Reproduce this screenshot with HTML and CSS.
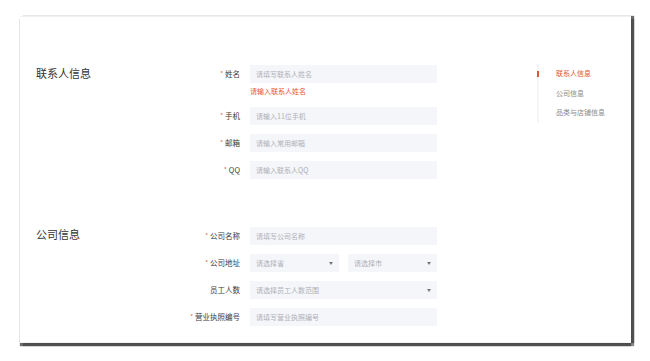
FILE: index.html
```html
<!DOCTYPE html>
<html lang="zh-CN">
<head>
<meta charset="utf-8">
<title>信息填写</title>
<link rel="stylesheet" href="styles.css">
</head>
<body>
<div class="card">
  <div class="main">
    <section class="section">
      <h2 class="section-title">联系人信息</h2>
      <div class="form">
        <div class="label"><span class="req">*</span>姓名</div>
        <div class="control">
          <div class="input">请填写联系人姓名</div>
          <div class="error">请输入联系人姓名</div>
        </div>
        <div class="label"><span class="req">*</span>手机</div>
        <div class="control"><div class="input">请输入11位手机</div></div>
        <div class="label"><span class="req">*</span>邮箱</div>
        <div class="control"><div class="input">请输入常用邮箱</div></div>
        <div class="label"><span class="req">*</span>QQ</div>
        <div class="control"><div class="input">请输入联系人QQ</div></div>
      </div>
    </section>
    <section class="section company">
      <h2 class="section-title">公司信息</h2>
      <div class="form">
        <div class="label"><span class="req">*</span>公司名称</div>
        <div class="control"><div class="input">请填写公司名称</div></div>
        <div class="label"><span class="req">*</span>公司地址</div>
        <div class="control split">
          <div class="input select"><span>请选择省</span><svg class="caret" width="4" height="3" viewBox="0 0 4 3"><path d="M0 0H4L2 3Z" fill="#777"/></svg></div>
          <div class="input select"><span>请选择市</span><svg class="caret" width="4" height="3" viewBox="0 0 4 3"><path d="M0 0H4L2 3Z" fill="#777"/></svg></div>
        </div>
        <div class="label">员工人数</div>
        <div class="control"><div class="input select"><span>请选择员工人数范围</span><svg class="caret" width="4" height="3" viewBox="0 0 4 3"><path d="M0 0H4L2 3Z" fill="#777"/></svg></div></div>
        <div class="label"><span class="req">*</span>营业执照编号</div>
        <div class="control"><div class="input">请填写营业执照编号</div></div>
      </div>
    </section>
  </div>
  <nav class="side-nav">
    <a class="nav-item active">联系人信息</a>
    <a class="nav-item">公司信息</a>
    <a class="nav-item">品类与店铺信息</a>
  </nav>
</div>
</body>
</html>
```

FILE: styles.css
```css
html, body {
  margin: 0;
  padding: 0;
  background: #ffffff;
}

body {
  font-family: "Noto Sans CJK SC", "Noto Sans", sans-serif;
  color: #333;
  min-height: 361px;
}

.card {
  margin: 16px 0 0 20px;
  width: 611px;
  height: 327px;
  box-sizing: border-box;
  background: #fff;
  border-top: 1px solid #f1f1f1;
  border-bottom: 1px solid #f4f4f4;
  box-shadow: 0 3px 1px rgba(60, 60, 60, 0.75), 3px 0 1px rgba(60, 60, 60, 0.75), 3px 3px 1px rgba(60, 60, 60, 0.6);
  display: flex;
}

.main {
  width: 517px;
  padding-top: 48px;
}

.section {
  display: flex;
  padding-left: 16px;
}

.company {
  margin-top: 48px;
}

.section-title {
  width: 144px;
  margin: 0;
  font-size: 11px;
  line-height: 16px;
  font-weight: 400;
  color: #333;
}

.company .section-title {
  margin-top: -1px;
}

.form {
  display: grid;
  grid-template-columns: 60px 187px;
  column-gap: 10px;
  row-gap: 9px;
  align-items: start;
}

.label {
  height: 18px;
  line-height: 18px;
  font-size: 7.5px;
  color: #3a3a3a;
  text-align: right;
  white-space: nowrap;
}

.req {
  color: #e0603e;
  font-size: 6px;
  margin-right: 2px;
  vertical-align: 1px;
}

.control {
  display: flex;
  flex-direction: column;
}

.control.split {
  flex-direction: row;
  gap: 9px;
}

.split .input {
  flex: 1;
}

.input {
  height: 18px;
  box-sizing: border-box;
  padding: 0 6px;
  background: #f5f6fa;
  font-size: 7px;
  line-height: 18px;
  color: #aeb0b6;
  white-space: nowrap;
}

.select {
  display: flex;
  align-items: center;
  justify-content: space-between;
}

.caret {
  display: block;
}

.error {
  margin: 3px 0 2px;
  font-size: 7px;
  line-height: 10px;
  color: #e8562e;
}

.side-nav {
  display: flex;
  flex-direction: column;
  margin-top: 47px;
  align-self: flex-start;
  border-left: 2px solid #f6f6f6;
}

.nav-item {
  position: relative;
  display: block;
  padding-left: 17px;
  font-size: 7px;
  line-height: 19.5px;
  color: #8a8a8a;
  white-space: nowrap;
}

.nav-item.active {
  color: #e2562c;
}

.nav-item.active::before {
  content: "";
  position: absolute;
  left: -2px;
  top: 7px;
  width: 2px;
  height: 6px;
  background: #e2562c;
}
```
